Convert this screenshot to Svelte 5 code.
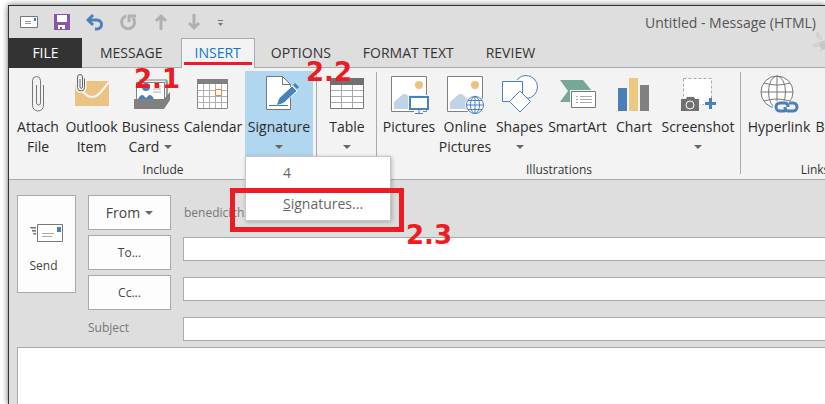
<script lang="ts">
  let to: string = '';
  let cc: string = '';
  let subject: string = '';
  let body: string = '';
  let activeTab: string = 'INSERT';
  let menuOpen: boolean = true;

  const tabs = ['MESSAGE', 'INSERT', 'OPTIONS', 'FORMAT TEXT', 'REVIEW'];

  const groups = [
    {
      id: 'include',
      title: 'Include',
      items: [
        { icon: 'clip', lines: ['Attach', 'File'] },
        { icon: 'item', lines: ['Outlook', 'Item'] },
        { icon: 'card', lines: ['Business', 'Card'], arrow: true },
        { icon: 'calendar', lines: ['Calendar'] },
        { icon: 'signature', lines: ['Signature'], arrow: true, menu: true },
      ],
    },
    {
      id: 'tables',
      title: '',
      items: [{ icon: 'table', lines: ['Table'], arrow: true }],
    },
    {
      id: 'illustrations',
      title: 'Illustrations',
      items: [
        { icon: 'picture', lines: ['Pictures'] },
        { icon: 'online', lines: ['Online', 'Pictures'] },
        { icon: 'shapes', lines: ['Shapes'], arrow: true },
        { icon: 'smartart', lines: ['SmartArt'] },
        { icon: 'chart', lines: ['Chart'] },
        { icon: 'screenshot', lines: ['Screenshot'], arrow: true },
      ],
    },
    {
      id: 'links',
      title: 'Links',
      items: [
        { icon: 'link', lines: ['Hyperlink'] },
        { icon: '', lines: ['Bookmark'] },
      ],
    },
  ] as any[];

  const handleItem = (item: any) => {
    if (item.menu) menuOpen = !menuOpen;
  };
</script>

{#snippet icon(name: string)}
  <svg class="icon" width="40" height="40" viewBox="0 0 40 40" fill="none" aria-hidden="true">
    {#if name === 'clip'}
      <path d="M25.5 11V31.5a5.5 5.5 0 0 1-11 0V6.500a4 4 0 0 1 8 0V29a2 2 0 0 1-4 0V11" stroke="#777" />
    {:else if name === 'item'}
      <path d="M3 7h34v25H3z" fill="#ebc382" />
      <path d="M3 8l9 11q8 8 16 0l9-11" stroke="#f3f3f3" stroke-width="2" />
      <path d="M12.500 4.500v9a3.500 3.500 0 0 1-7 0V3a2.500 2.500 0 0 1 5 0v10a1.200 1.200 0 0 1-2.500 0V5" stroke="#f3f3f3" stroke-width="4" />
      <path d="M12.500 4.500v9a3.500 3.500 0 0 1-7 0V3a2.500 2.500 0 0 1 5 0v10a1.200 1.200 0 0 1-2.500 0V5" stroke="#666" />
    {:else if name === 'card'}
      <path d="M8 6h28v21h-3M34 8h2v22" stroke="#808080" />
      <path d="M5.500 8.500h28V27h-28z" fill="#fff" stroke="#808080" />
      <circle cx="15" cy="13" r="4" fill="#4a7fb8" />
      <path d="M7 26q1-5 5-5l3 3 3-3q4 0 5 5z" fill="#4a7fb8" />
      <path d="M22 15h8M22 18h8M24 12h6" stroke="#aaa" />
      <path d="M3 25h30l6-7v8l-6 9H3z" fill="#808080" />
    {:else if name === 'calendar'}
      <path d="M4.500 6.500h30v28h-30z" fill="#fff" stroke="#888" />
      <path d="M4 5h31v5H4z" fill="#808080" />
      <path d="M10.500 10v24M16.500 10v24M22.500 10v24M28.500 10v24M5 16.500h29M5 22.500h29M5 28.500h29" stroke="#b0b0b0" />
      <path d="M22.500 15.500h6v6h-6z" fill="#fff" stroke="#e08a3c" />
    {:else if name === 'signature'}
      <path d="M7.500 2.500h16l8 8v25h-24z" fill="#fff" stroke="#777" />
      <path d="M23.500 2.500v8h8" stroke="#777" />
      <path d="M10 31.500h19" stroke="#3f78b5" />
      <path d="M18 31l2-7L33 12l5 5-13 12z" fill="#4a80bb" stroke="#fff" />
      <path d="M34 11l2-2 4 4-2 2z" fill="#4a80bb" />
      <path d="M18 31l2-6 4 4z" fill="#4a80bb" />
    {:else if name === 'table'}
      <path d="M3.500 6.500h33v28h-33z" fill="#fff" stroke="#777" />
      <path d="M14.500 10v24M25.500 10v24M4 16.500h32M4 22.500h32M4 28.500h32" stroke="#aaa" />
      <path d="M3 4h34v7H3z" fill="#707070" />
    {:else if name === 'picture' || name === 'online'}
      <path d="M2.500 2.500h35v35h-35z" fill="#fff" stroke="#808080" />
      <circle cx="30" cy="11" r="4" fill="#ebc37f" />
      <path d="M5 35V28l9-8h3l9 8v7z" fill="#c1d3e8" />
      {#if name === 'picture'}
        <path d="M19 21h21v15h-6v4h-9v-4h-6z" fill="#f3f3f3" />
        <path d="M21 23h18v12H21z" fill="#fff" stroke="#4a80bb" stroke-width="2" />
        <path d="M30 36v3M26 39.500h8" stroke="#4a80bb" stroke-width="1" />
      {:else}
        <circle cx="30" cy="31" r="10" fill="#f3f3f3" />
        <circle cx="30" cy="31" r="8.500" fill="#fff" stroke="#4a80bb" />
        <path d="M30 22.500v17M21.500 31h17M23 26.500h14M23 35.500h14" stroke="#4a80bb" />
        <ellipse cx="30" cy="31" rx="4.500" ry="8.500" stroke="#4a80bb" />
      {/if}
    {:else if name === 'shapes'}
      <circle cx="26" cy="13" r="11.500" fill="#fff" stroke="#4a80bb" />
      <path d="M2.500 7.500h20v20h-20z" fill="#fff" stroke="#f3f3f3" stroke-width="3" />
      <path d="M2.500 7.500h20v20h-20z" fill="#fff" stroke="#4a80bb" />
      <path d="M20 17l10.500 10.500L20 38 9.500 27.500z" fill="#fff" stroke="#4a80bb" />
    {:else if name === 'smartart'}
      <path d="M2 6h23l9 11-9 11H2l8-11z" fill="#76a797" />
      <path d="M12 16h27v19H12z" fill="#f3f3f3" />
      <path d="M13.500 17.500h24v16h-24z" fill="#fff" stroke="#777" />
      <path d="M18 22.500h2M18 25.500h2M18 28.500h2M22 22.500h12M22 25.500h12M22 28.500h12" stroke="#aaa" />
    {:else if name === 'chart'}
      <path d="M4 14h9v23H4z" fill="#4a80b8" />
      <path d="M15 4h9v33h-9z" fill="#edc880" />
      <path d="M26 11h9v26h-9z" fill="#808080" />
    {:else if name === 'screenshot'}
      <path d="M5.500 4.500h28v26h-28z" fill="#fff" stroke="#aaa" stroke-dasharray="3 2" />
      <path d="M2 24h5l2-2h6l2 2h5v14H2zM26 26h12v9H26z" fill="#f3f3f3" />
      <path d="M3 25h5l1-2h7l1 2h4v12H3z" fill="#707070" />
      <circle cx="12" cy="31" r="4" stroke="#fff" stroke-width="1" />
      <path d="M32.500 24v11M27 29.500h11" stroke="#4a80b8" stroke-width="3" />
    {:else if name === 'link'}
      <circle cx="18" cy="18" r="16" fill="#fff" stroke="#777" />
      <ellipse cx="18" cy="18" rx="8.500" ry="16" stroke="#777" />
      <path d="M18 2v32M2 18h32M5 9q13 4 26 0M5 27q13-4 26 0" stroke="#777" />
      <rect x="14" y="27" width="26" height="13" rx="5" fill="#f3f3f3" />
      <path d="M26 37h-5a4 4 0 0 1 0-8h5q3 0 3 4M26 33q0 4 3 4h5a4 4 0 0 0 0-8h-4" stroke="#4a80bb" stroke-width="3" />
    {/if}
  </svg>
{/snippet}

<div class="page">
  <main class="window">
    <header class="titlebar">
      <div class="quick">
        <button aria-label="Message">
          <svg width="18" height="18" viewBox="0 0 18 18" fill="none">
            <path d="M.5 3.500h17v11H.5z" fill="#fff" stroke="#777" />
            <path d="M5 8.500h6M5 10.500h6" stroke="#999" />
            <path d="M14 5h2v3h-2z" fill="#3f78b5" />
          </svg>
        </button>
        <button aria-label="Save">
          <svg width="18" height="18" viewBox="0 0 18 18">
            <path d="M1 1h16v16H1z" fill="#8657a8" />
            <path d="M4 2h10v7H4zM5 12h7v4H9v-2H7v2H5z" fill="#fff" />
          </svg>
        </button>
        <button aria-label="Undo">
          <svg width="18" height="18" viewBox="0 0 18 18" fill="none" stroke="#4a80bb" stroke-width="3">
            <path d="M2 7h9a4.500 4.500 0 0 1 0 9H9" />
            <path d="M7 2L2 7l5 5" />
          </svg>
        </button>
        <button aria-label="Repeat">
          <svg width="18" height="18" viewBox="0 0 18 18" fill="none" stroke="#b0b0b0" stroke-width="3">
            <path d="M7 3a6.500 6.500 0 1 0 7 2" />
            <path d="M10 9V3h7" />
          </svg>
        </button>
        <button aria-label="Previous item">
          <svg width="18" height="18" viewBox="0 0 18 18" fill="none" stroke="#b0b0b0" stroke-width="3">
            <path d="M9 17V3M4 8l5-5 5 5" />
          </svg>
        </button>
        <button aria-label="Next item">
          <svg width="18" height="18" viewBox="0 0 18 18" fill="none" stroke="#b0b0b0" stroke-width="3">
            <path d="M9 1v14M4 10l5 5 5-5" />
          </svg>
        </button>
        <button aria-label="Customize toolbar">
          <svg width="10" height="18" viewBox="0 0 10 18">
            <path d="M0 7h5v1H0zM0 10h5l-2.500 3z" fill="#777" />
          </svg>
        </button>
      </div>
      <span class="title">Untitled - Message (HTML)</span>
      <svg class="flake" width="14" height="24" viewBox="0 0 14 24" fill="none" stroke="#c8c8c8" aria-hidden="true">
        <path d="M7 2c-3 3 0 7 3 8 1-4-1-5-3-4zM14 12l-9 2-4 2M14 15l-9 1-3 3M14 18l-5 3" />
        <circle cx="13" cy="15" r="4" fill="#c8c8c8" />
      </svg>
    </header>

    <nav class="tabs">
      <button class="file">FILE</button>
      {#each tabs as tab}
        <button class="tab" class:active={tab === activeTab} on:click={() => (activeTab = tab)}>{tab}</button>
      {/each}
    </nav>

    <section class="ribbon">
      {#each groups as group}
        <div class="group {group.id}">
          <div class="items">
            {#each group.items as item}
              <div class="slot">
                <button class="item" class:open={item.menu && menuOpen} on:click={() => handleItem(item)}>
                  {@render icon(item.icon)}
                  <span>{item.lines[0]}</span>
                  <span class="second">
                    {item.lines[1] ?? ''}
                    {#if item.arrow}<i class="arrow"></i>{/if}
                  </span>
                </button>
                {#if item.menu && menuOpen}
                  <div class="menu">
                    <button>4</button>
                    <hr />
                    <button><u>S</u>ignatures...</button>
                  </div>
                {/if}
              </div>
            {/each}
          </div>
          <div class="caption">{group.title}</div>
        </div>
      {/each}
    </section>

    <form class="compose" on:submit|preventDefault>
      <div class="head">
        <button class="box send" type="submit">
          <svg width="34" height="18" viewBox="0 0 34 18" fill="none" aria-hidden="true">
            <path d="M7.500.5h25v17h-25z" fill="#fff" stroke="#777" />
            <path d="M12 9.500h12M12 12.500h10" stroke="#aaa" />
            <path d="M27 3h4v5h-4z" fill="#4a80bb" />
            <path d="M0 3.500h6M2 6.500h4M3 9.500h3" stroke="#777" />
            <path d="M1 4.500h5M2 7.500h4M4 10.500h2" stroke="#aaa" />
          </svg>
          <span>Send</span>
        </button>
        <div class="fields">
          <button class="box from" type="button">From <i class="arrow"></i></button>
          <span class="sender">benedicich</span>
          <button class="box" type="button">To...</button>
          <input type="text" aria-label="To" bind:value={to} />
          <button class="box" type="button">Cc...</button>
          <input type="text" aria-label="Cc" bind:value={cc} />
          <label for="subject">Subject</label>
          <input id="subject" type="text" bind:value={subject} />
        </div>
      </div>
      <textarea aria-label="Message body" bind:value={body}></textarea>
    </form>
  </main>

  <!-- numbered steps drawn over the window -->
  <div class="frame"></div>
  <strong class="step one">2.1</strong>
  <strong class="step two">2.2</strong>
  <strong class="step three">2.3</strong>
</div>

<style>
  :global(body) {
    background: #fff;
  }

  .page {
    position: relative;
    min-height: 100vh;
    box-sizing: border-box;
    padding: 5px 0 0 8px;
    overflow: hidden;
    display: flex;
    font-family: 'Open Sans', 'Noto Sans', sans-serif;
    font-size: 14px;
    line-height: 20px;
    color: #333;
  }

  .window {
    flex: 1;
    min-width: 0;
    display: flex;
    flex-direction: column;
    background: #dedede;
    border: 1px solid #333;
    border-width: 1px 0 0 1px;
    box-shadow: 0 0 6px rgba(0, 0, 0, 0.6);
  }

  button {
    margin: 0;
    padding: 0;
    border: none;
    background: none;
    font: inherit;
    color: inherit;
    cursor: pointer;
  }

  svg {
    display: block;
    flex: none;
  }

  .titlebar {
    position: relative;
    display: flex;
    justify-content: space-between;
    align-items: center;
    height: 32px;
    padding: 0 9px 0 11px;
  }

  .quick {
    display: flex;
    gap: 15px;
  }

  .title {
    padding-top: 2px;
    color: #555;
  }

  .flake {
    position: absolute;
    right: 0;
    top: 24px;
  }

  .tabs {
    display: flex;
    height: 30px;
    box-shadow: inset 0 -1px #aaa;
  }

  .file {
    width: 73px;
    background: #333;
    color: #fff;
  }

  .tab {
    padding: 0 15px 2px;
    border: 1px solid transparent;
    border-bottom: none;
  }

  .tab:nth-child(2) {
    padding: 0 17px 2px;
  }

  .tab.active {
    position: relative;
    padding: 0 13px 2px;
    background: #f3f3f3;
    border-color: #aaa;
    color: #1277c4;
  }

  .tab.active::after {
    content: '';
    position: absolute;
    left: 2px;
    right: 2px;
    bottom: 3px;
    height: 3px;
    background: #ed1c24;
  }

  .ribbon {
    display: flex;
    background: #f3f3f3;
    border-bottom: 1px solid #aaa;
  }

  .group {
    position: relative;
    flex: none;
    padding: 3px 4px 0;
  }

  .group:not(:last-child)::after {
    content: '';
    position: absolute;
    right: 0;
    top: 4px;
    bottom: 5px;
    width: 1px;
    background: #aaa;
  }

  .items {
    display: grid;
  }

  .include .items {
    grid-template-columns: 50px 57px 61px 64px 68px;
  }

  .tables .items {
    grid-template-columns: 52px;
  }

  .illustrations .items {
    grid-template-columns: 56px 56px 53px 63px 50px 78px;
  }

  .links .items {
    grid-template-columns: 68px 72px;
  }

  .slot {
    position: relative;
  }

  .item {
    display: flex;
    flex-direction: column;
    align-items: center;
    width: 100%;
    height: 85px;
    padding-top: 3px;
    color: #2b2b2b;
    white-space: nowrap;
  }

  .item > span {
    margin-top: 3px;
  }

  .item > .second {
    display: flex;
    align-items: center;
    gap: 5px;
    height: 20px;
    margin: 0;
  }

  .item.open {
    background: #b1d6f0;
  }

  .arrow {
    border: 4px solid transparent;
    border-top-color: #666;
    border-bottom: none;
  }

  .caption {
    height: 23px;
    font-size: 12px;
    line-height: 27px;
    text-align: center;
  }

  .menu {
    position: absolute;
    z-index: 1;
    left: 0;
    top: 100%;
    box-sizing: border-box;
    width: 146px;
    padding: 1px;
    background: #fff;
    border: 1px solid #c6c6c6;
    box-shadow: 1px 1px 4px rgba(0, 0, 0, 0.25);
    color: #666;
  }

  .menu button {
    display: block;
    width: 100%;
    height: 30px;
    padding: 0 0 0 36px;
    text-align: left;
  }

  .menu hr {
    margin: 0 0 0 38px;
    border: none;
    border-top: 1px solid #e1e1e1;
  }

  .compose {
    flex: 1;
    display: flex;
    flex-direction: column;
    padding: 15px 0 0 8px;
    font-size: 12px;
  }

  .head {
    display: flex;
    align-items: flex-start;
    gap: 12px;
  }

  .box {
    height: 35px;
    background: #fdfdfd;
    border: 1px solid #aaa;
    color: #444;
  }

  .send {
    display: flex;
    flex-direction: column;
    align-items: center;
    justify-content: center;
    gap: 14px;
    width: 59px;
    height: 98px;
    padding-top: 12px;
  }

  .send span {
    margin-right: 6px;
  }

  .from {
    display: flex;
    align-items: center;
    justify-content: center;
    gap: 5px;
    font-size: 14px;
  }

  .fields {
    flex: 1;
    display: grid;
    grid-template-columns: 83px 1fr;
    grid-template-rows: 35px 35px 35px 29px;
    gap: 5px 12px;
  }

  .sender {
    align-self: center;
    padding-left: 1px;
    color: #777;
  }

  label {
    padding-top: 3px;
    color: #777;
  }

  input,
  textarea {
    box-sizing: border-box;
    margin: 0;
    padding: 0 4px;
    background: #fff;
    border: 1px solid #aaa;
    border-right: none;
    border-radius: 0;
    outline: none;
    font: inherit;
  }

  input {
    height: 24px;
    margin-top: 2px;
  }

  textarea {
    flex: 1;
    margin-top: 3px;
    border-bottom: none;
    resize: none;
  }

  .frame {
    position: absolute;
    z-index: 2;
    left: 230px;
    top: 188px;
    box-sizing: border-box;
    width: 174px;
    height: 44px;
    border: 5px solid #ed1c24;
    pointer-events: none;
  }

  .step {
    position: absolute;
    z-index: 2;
    font: bold 26px/30px 'DejaVu Sans', sans-serif;
    color: #ed1c24;
    pointer-events: none;
  }

  .one {
    left: 134px;
    top: 64px;
  }

  .two {
    left: 306px;
    top: 57px;
  }

  .three {
    left: 406px;
    top: 220px;
  }
</style>
